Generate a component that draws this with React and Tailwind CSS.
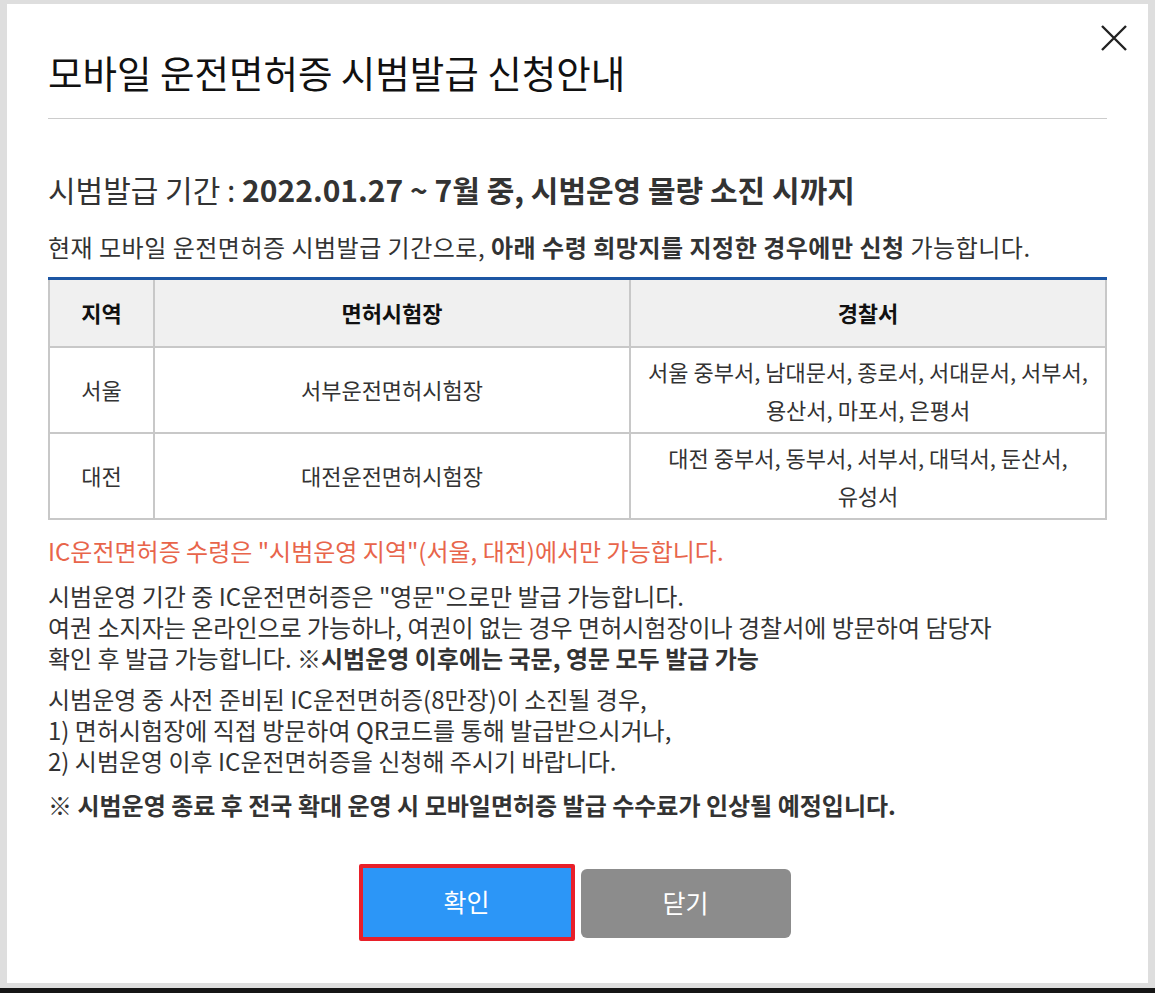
const font = { fontFamily: '"Noto Sans CJK KR", "Noto Sans", sans-serif' };

const rows = [
  {
    region: '서울',
    center: '서부운전면허시험장',
    police: ['서울 중부서, 남대문서, 종로서, 서대문서, 서부서,', '용산서, 마포서, 은평서'],
  },
  {
    region: '대전',
    center: '대전운전면허시험장',
    police: ['대전 중부서, 동부서, 서부서, 대덕서, 둔산서,', '유성서'],
  },
];

const CloseIcon = () => (
  <svg width="28" height="28" viewBox="0 0 28 28" fill="none">
    <path d="M2 2 L26 26 M26 2 L2 26" stroke="#222" strokeWidth="2.4" />
  </svg>
);

export default function App() {
  return (
    <div className="flex h-[993px] w-[1155px] flex-col bg-[#dedede]" style={font}>
      <div className="ml-[7px] mt-[4px] h-[979px] w-[1141px] bg-white px-[41px] text-[#333]">
        <div className="flex items-start justify-between">
          <h1 className="pt-[43px] text-[37.5px] leading-[50px] text-[#111]">
            모바일 운전면허증 시범발급 신청안내
          </h1>
          <button className="mr-[-21px] mt-[20px]">
            <CloseIcon />
          </button>
        </div>
        <div className="mt-[21px] h-px bg-[#cccccc]" />

        <p className="mt-[52px] text-[30px] leading-[36px]">
          시범발급 기간 : <b className="font-bold">2022.01.27 ~ 7월 중, 시범운영 물량 소진 시까지</b>
        </p>
        <p className="mt-[25px] text-[24px] leading-[30px] tracking-[0.5px]">
          현재 모바일 운전면허증 시범발급 기간으로, <b className="font-bold">아래 수령 희망지를 지정한 경우에만 신청</b> 가능합니다.
        </p>

        <table className="mt-[15px] w-full border-collapse border-t-[3px] border-t-[#1d56a3] text-center text-[22px]">
          <thead>
            <tr className="h-[68px] bg-[#f0f0f0] text-[#111]">
              <th className="w-[105px] border-2 border-t-0 border-[#c8c8c8] font-bold">지역</th>
              <th className="w-[476px] border-2 border-t-0 border-[#c8c8c8] font-bold">면허시험장</th>
              <th className="border-2 border-t-0 border-[#c8c8c8] font-bold">경찰서</th>
            </tr>
          </thead>
          <tbody>
            {rows.map((row) => (
              <tr key={row.region} className="h-[86px]">
                <td className="border-2 border-[#c8c8c8]">{row.region}</td>
                <td className="border-2 border-[#c8c8c8]">{row.center}</td>
                <td className="border-2 border-[#c8c8c8] leading-[38px]">
                  {row.police.map((line) => (
                    <div key={line}>{line}</div>
                  ))}
                </td>
              </tr>
            ))}
          </tbody>
        </table>

        <p className="mt-[16px] text-[24px] leading-[30px] text-[#e8654b]">
          IC운전면허증 수령은 "시범운영 지역"(서울, 대전)에서만 가능합니다.
        </p>
        <p className="mt-[14px] text-[24px] leading-[31px]">
          시범운영 기간 중 IC운전면허증은 "영문"으로만 발급 가능합니다.
          <br />
          여권 소지자는 온라인으로 가능하나, 여권이 없는 경우 면허시험장이나 경찰서에 방문하여 담당자
          <br />
          확인 후 발급 가능합니다. ※<b className="font-bold">시범운영 이후에는 국문, 영문 모두 발급 가능</b>
        </p>
        <p className="mt-[10px] text-[24px] leading-[31px]">
          시범운영 중 사전 준비된 IC운전면허증(8만장)이 소진될 경우,
          <br />
          1) 면허시험장에 직접 방문하여 QR코드를 통해 발급받으시거나,
          <br />
          2) 시범운영 이후 IC운전면허증을 신청해 주시기 바랍니다.
        </p>
        <p className="mt-[14px] text-[24px] leading-[30px]">
          ※ <b className="font-bold">시범운영 종료 후 전국 확대 운영 시 모바일면허증 발급 수수료가 인상될 예정입니다.</b>
        </p>

        <div className="mt-[44px] flex justify-center gap-[6px] pr-[6px]">
          <div className="rounded-[2px] border-[4px] border-[#e8202a]">
            <button className="h-[69px] w-[208px] bg-[#2c96f7] text-[25px] text-white">확인</button>
          </div>
          <button className="mt-[5px] h-[69px] w-[210px] rounded-[6px] bg-[#8c8c8c] text-[25px] text-white">
            닫기
          </button>
        </div>
      </div>
      <div className="mt-auto h-[5px] bg-[#151515]" />
    </div>
  );
}
